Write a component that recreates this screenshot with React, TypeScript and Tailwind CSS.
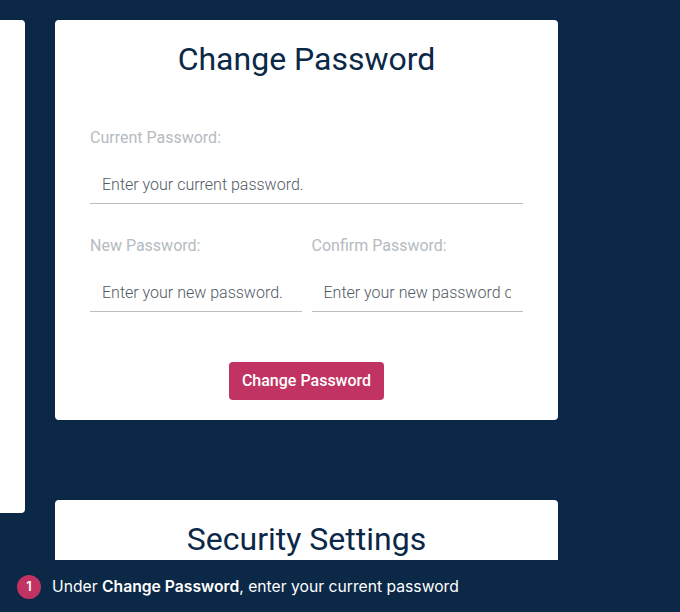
const inputCls =
  "w-full h-[39px] border-b border-[#b9bec3] bg-transparent px-3 text-base font-light text-[#4a5560] outline-none placeholder:text-[#4f5a64] placeholder:opacity-100";

function Field({ label, placeholder }: { label: string; placeholder: string }) {
  return (
    <div className="flex min-w-0 flex-col">
      <label className="text-base leading-[18px] text-[#b5bbc1]">{label}</label>
      <input className={`${inputCls} mt-[18px]`} placeholder={placeholder} readOnly />
    </div>
  );
}

export default function App() {
  return (
    <div className="flex h-[612px] w-[680px] flex-col overflow-hidden bg-[#0b2847] font-['Roboto',sans-serif]">
      <div className="flex h-[560px] shrink-0 gap-[30px] overflow-hidden pt-5">
        {/* Sidebar card, cut off by the left edge */}
        <div className="h-[493px] w-[25px] shrink-0 rounded-r-[4px] bg-white" />

        <div className="flex w-[503px] shrink-0 flex-col gap-20">
          {/* Change password */}
          <section className="flex h-[400px] shrink-0 flex-col rounded-[4px] bg-white px-[35px]">
            <h2 className="mt-5 text-center text-[32px] leading-[38px] text-[#0b2847]">Change Password</h2>
            <div className="mt-[51px]">
              <Field label="Current Password:" placeholder="Enter your current password." />
            </div>
            <div className="mt-[33px] grid grid-cols-2 gap-[10px]">
              <Field label="New Password:" placeholder="Enter your new password." />
              <Field label="Confirm Password:" placeholder="Enter your new password confirmation." />
            </div>
            <button className="mx-auto mt-[50px] h-[38px] w-[155px] rounded-[4px] bg-[#c03362] text-base font-medium text-white">
              Change Password
            </button>
          </section>

          {/* Security settings */}
          <section className="h-[200px] shrink-0 rounded-[4px] bg-white">
            <h2 className="mt-5 text-center text-[32px] leading-[38px] text-[#0b2847]">Security Settings</h2>
          </section>
        </div>
      </div>

      {/* Step caption */}
      <div className="flex h-[52px] items-center gap-[11px] pl-[17px] pt-[1px] font-['Inter',sans-serif] text-[15.7px] text-white">
        <span className="flex h-6 w-6 items-center justify-center rounded-full bg-[#c03362] text-[13px] font-semibold">1</span>
        <p>
          Under <b className="font-semibold">Change Password</b>, enter your current password
        </p>
      </div>
    </div>
  );
}
